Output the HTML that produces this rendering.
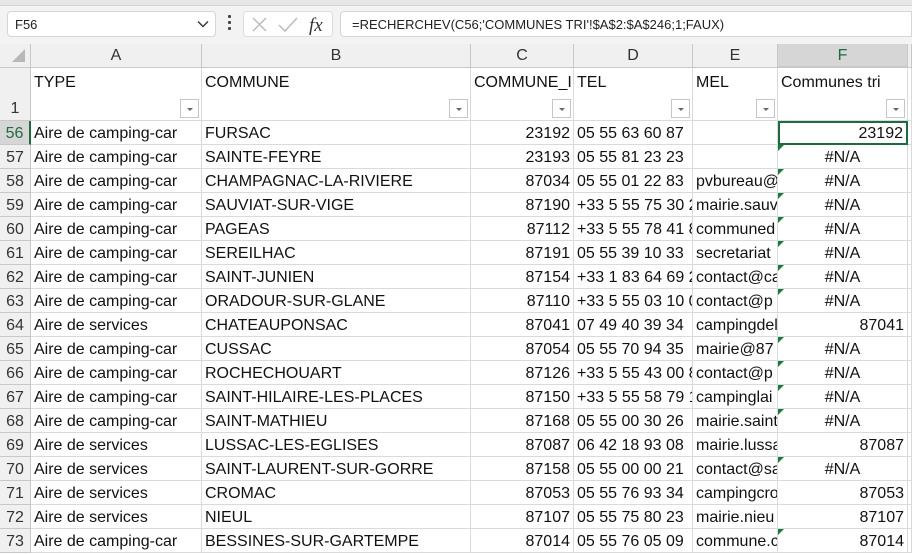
<!DOCTYPE html>
<html><head><meta charset="utf-8"><style>
*{margin:0;padding:0;box-sizing:border-box}
body{width:912px;height:554px;overflow:hidden;background:#fff;font-family:"Liberation Sans",sans-serif;position:relative}
.top{position:absolute;left:0;top:0;width:912px;height:44px;background:#f3f3f3}
.top .strip{position:absolute;left:0;top:0;width:912px;height:6px;background:#e6e6e6;border-bottom:1px solid #d4d4d4}
.nb{position:absolute;left:7px;top:11px;width:209px;height:26px;background:#fff;border:1px solid #d6d6d6;border-radius:4px;font-size:13px;padding:5px 0 0 7px;color:#222}
.nb svg{position:absolute;right:6px;top:8px}
.dots{position:absolute;left:228px;top:15px;width:3px}
.dots i{display:block;width:3px;height:3px;background:#444;margin-bottom:3px;border-radius:1px}
.fxb{position:absolute;left:243px;top:11px;width:90px;height:26px;background:#fff;border:1px solid #ddd;border-radius:4px}
.fb{position:absolute;left:340px;top:11px;width:572px;height:26px;background:#fff;border:1px solid #d6d6d6;border-radius:4px 0 0 4px;font-size:13px;padding:5px 0 0 11px;color:#222}
.row{position:absolute;left:0;width:912px;height:24px;display:flex;font-size:16px;color:#111}
.row>div{height:100%;border-right:1px solid #dadada;border-bottom:1px solid #dadada;white-space:nowrap;overflow:hidden;padding:0 3px;line-height:25px;position:relative;flex:none}
.row>div:nth-child(1){width:31px;background:#f0f0f0;text-align:center;color:#333;padding:0;border-color:#c8c8c8}
.row>div:nth-child(2){width:171px}
.row>div:nth-child(3){width:269px}
.row>div:nth-child(4){width:103px}
.row>div:nth-child(5){width:119px}
.row>div:nth-child(6){width:85px}
.row>div:nth-child(7){width:130px}
.row>div:nth-child(8){width:4px;padding:0}
.hd>div{background:#f0f0f0;text-align:center;color:#333;border-color:#c8c8c8 !important;line-height:24px}
.r1{height:53px}
.r1>div{line-height:20px;padding-top:5px}
.r{text-align:right}.c{text-align:center}
.dd{position:absolute;right:2px;bottom:2px;width:19px;height:19px;border:1px solid #c6c6c6;background:#fff}
.dd:after{content:"";position:absolute;left:6px;top:8px;border-left:3px solid transparent;border-right:3px solid transparent;border-top:3px solid #666}
.tri{position:absolute;width:0;height:0;border-top:6px solid #1f7a3a;border-right:6px solid transparent}
</style></head><body>
<div class="top"><div class="strip"></div>
<div class="nb">F56<svg width="12" height="8" viewBox="0 0 12 8"><path d="M1 1.5 L6 6.5 L11 1.5" fill="none" stroke="#333" stroke-width="1.4"/></svg></div>
<div class="dots"><i></i><i></i><i></i></div>
<div class="fxb"><svg width="90" height="26" viewBox="0 0 90 26"><path d="M9 6 L22 19 M22 6 L9 19" stroke="#bbb" stroke-width="1.5"/><path d="M35 13 L41 19 L53 6" fill="none" stroke="#bbb" stroke-width="1.5"/><text x="65" y="19" font-family="Liberation Serif,serif" font-style="italic" font-size="19" fill="#333">fx</text></svg></div>
<div class="fb">=RECHERCHEV(C56;'COMMUNES TRI'!$A$2:$A$246;1;FAUX)</div>
</div>

<div class="row hd" style="top:44px"><div><svg width="20" height="16" style="margin-top:4px;margin-left:8px"><path d="M16 1 L16 14 L3 14 Z" fill="#b8b8b8"/></svg></div><div>A</div><div>B</div><div>C</div><div>D</div><div>E</div><div style="background:#d6d6d6;border-bottom:2px solid #1e6b41;color:#1e6b41">F</div><div></div></div>
<div class="row r1" style="top:68px"><div style="padding-top:31px">1</div><div>TYPE<span class="dd"></span></div><div>COMMUNE<span class="dd"></span></div><div>COMMUNE_I<span class="dd"></span></div><div>TEL<span class="dd"></span></div><div>MEL<span class="dd"></span></div><div>Communes tri<span class="dd"></span></div><div></div></div>
<div class="row" style="top:121px"><div style="color:#1e6b41;background:#d6d6d6;border-right:2px solid #1e6b41">56</div><div>Aire de camping-car</div><div>FURSAC</div><div class="r">23192</div><div>05 55 63 60 87</div><div></div><div class="r" style="border:2px solid #1e6b41;line-height:22px">23192</div><div></div></div>
<div class="row" style="top:145px"><div>57</div><div>Aire de camping-car</div><div>SAINTE-FEYRE</div><div class="r">23193</div><div>05 55 81 23 23</div><div></div><div class="c">#N/A</div><div></div></div>
<div class="row" style="top:169px"><div>58</div><div>Aire de camping-car</div><div>CHAMPAGNAC-LA-RIVIERE</div><div class="r">87034</div><div>05 55 01 22 83</div><div>pvbureau@</div><div class="c">#N/A</div><div></div></div>
<div class="row" style="top:193px"><div>59</div><div>Aire de camping-car</div><div>SAUVIAT-SUR-VIGE</div><div class="r">87190</div><div>+33 5 55 75 30 2</div><div>mairie.sauv</div><div class="c">#N/A</div><div></div></div>
<div class="row" style="top:217px"><div>60</div><div>Aire de camping-car</div><div>PAGEAS</div><div class="r">87112</div><div>+33 5 55 78 41 8</div><div>communed</div><div class="c">#N/A</div><div></div></div>
<div class="row" style="top:241px"><div>61</div><div>Aire de camping-car</div><div>SEREILHAC</div><div class="r">87191</div><div>05 55 39 10 33</div><div>secretariat</div><div class="c">#N/A</div><div></div></div>
<div class="row" style="top:265px"><div>62</div><div>Aire de camping-car</div><div>SAINT-JUNIEN</div><div class="r">87154</div><div>+33 1 83 64 69 2</div><div>contact@ca</div><div class="c">#N/A</div><div></div></div>
<div class="row" style="top:289px"><div>63</div><div>Aire de camping-car</div><div>ORADOUR-SUR-GLANE</div><div class="r">87110</div><div>+33 5 55 03 10 0</div><div>contact@p</div><div class="c">#N/A</div><div></div></div>
<div class="row" style="top:313px"><div>64</div><div>Aire de services</div><div>CHATEAUPONSAC</div><div class="r">87041</div><div>07 49 40 39 34</div><div>campingdel</div><div class="r">87041</div><div></div></div>
<div class="row" style="top:337px"><div>65</div><div>Aire de camping-car</div><div>CUSSAC</div><div class="r">87054</div><div>05 55 70 94 35</div><div>mairie@87</div><div class="c">#N/A</div><div></div></div>
<div class="row" style="top:361px"><div>66</div><div>Aire de camping-car</div><div>ROCHECHOUART</div><div class="r">87126</div><div>+33 5 55 43 00 8</div><div>contact@p</div><div class="c">#N/A</div><div></div></div>
<div class="row" style="top:385px"><div>67</div><div>Aire de camping-car</div><div>SAINT-HILAIRE-LES-PLACES</div><div class="r">87150</div><div>+33 5 55 58 79 1</div><div>campinglai</div><div class="c">#N/A</div><div></div></div>
<div class="row" style="top:409px"><div>68</div><div>Aire de camping-car</div><div>SAINT-MATHIEU</div><div class="r">87168</div><div>05 55 00 30 26</div><div>mairie.saint</div><div class="c">#N/A</div><div></div></div>
<div class="row" style="top:433px"><div>69</div><div>Aire de services</div><div>LUSSAC-LES-EGLISES</div><div class="r">87087</div><div>06 42 18 93 08</div><div>mairie.lussa</div><div class="r">87087</div><div></div></div>
<div class="row" style="top:457px"><div>70</div><div>Aire de services</div><div>SAINT-LAURENT-SUR-GORRE</div><div class="r">87158</div><div>05 55 00 00 21</div><div>contact@sa</div><div class="c">#N/A</div><div></div></div>
<div class="row" style="top:481px"><div>71</div><div>Aire de services</div><div>CROMAC</div><div class="r">87053</div><div>05 55 76 93 34</div><div>campingcro</div><div class="r">87053</div><div></div></div>
<div class="row" style="top:505px"><div>72</div><div>Aire de services</div><div>NIEUL</div><div class="r">87107</div><div>05 55 75 80 23</div><div>mairie.nieu</div><div class="r">87107</div><div></div></div>
<div class="row" style="top:529px"><div>73</div><div>Aire de camping-car</div><div>BESSINES-SUR-GARTEMPE</div><div class="r">87014</div><div>05 55 76 05 09</div><div>commune.c</div><div class="r">87014</div><div></div></div>

<div class="tri" style="left:778px;top:145px"></div>
<div class="tri" style="left:778px;top:169px"></div>
<div class="tri" style="left:778px;top:193px"></div>
<div class="tri" style="left:778px;top:217px"></div>
<div class="tri" style="left:778px;top:241px"></div>
<div class="tri" style="left:778px;top:265px"></div>
<div class="tri" style="left:778px;top:289px"></div>
<div class="tri" style="left:778px;top:337px"></div>
<div class="tri" style="left:778px;top:361px"></div>
<div class="tri" style="left:778px;top:385px"></div>
<div class="tri" style="left:778px;top:409px"></div>
<div class="tri" style="left:778px;top:457px"></div>
<div class="tri" style="left:778px;top:529px"></div>
</body></html>
